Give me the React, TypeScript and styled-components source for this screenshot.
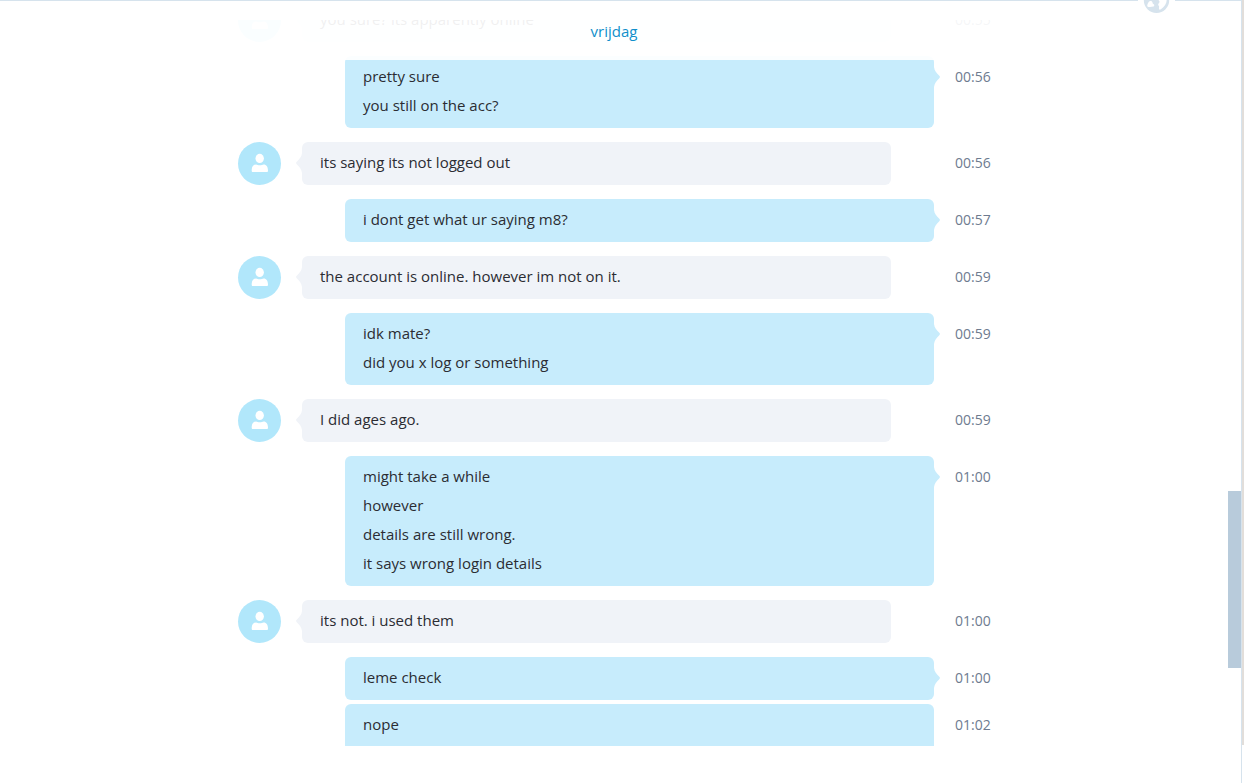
import React from "react";
import styled, { createGlobalStyle } from "styled-components";

const GlobalStyle = createGlobalStyle`
  *, *::before, *::after { box-sizing: border-box; }
  body {
    margin: 0;
    background: #fff;
    color: #2b2c33;
    font-family: "Segoe UI", "Open Sans", "Noto Sans", sans-serif;
    font-size: 15px;
  }
`;

const Page = styled.div`
  display: flex;
  height: 100vh;
  overflow: hidden;
`;

const Panel = styled.main`
  position: relative;
  flex: 1;
  min-width: 0;
  display: flex;
  border-top: 1px solid #d6e3ed;
  border-right: 1px solid #d6e3ed;
`;

const Edge = styled.div`
  width: 2px;
  margin-bottom: 38px;
  background: #e2deda;
`;

const Badge = styled.div`
  position: absolute;
  top: -1px;
  right: 66px;
  width: 37px;
  height: 14px;
  display: flex;
  justify-content: center;
  background: #fff;
`;

const Conversation = styled.section`
  position: relative;
  flex: 1;
  min-width: 0;
  margin: 19px 0 37px;
  overflow: hidden;
`;

const DayHeader = styled.header`
  position: absolute;
  top: 0;
  left: 0;
  right: 0;
  z-index: 1;
  height: 40px;
  line-height: 23px;
  text-align: center;
  color: #0f8fcb;
  background: rgba(255, 255, 255, 0.93);
`;

const Messages = styled.ol`
  display: flex;
  flex-direction: column;
  max-width: 752px;
  margin: -21px auto 0;
  padding: 0;
  list-style: none;
`;

const Row = styled.li<{ $tight?: boolean }>`
  display: flex;
  align-items: flex-start;
  margin-bottom: ${(p) => (p.$tight ? 4 : 14)}px;
`;

const Avatar = styled.div`
  flex: none;
  width: 43px;
  height: 43px;
  border-radius: 50%;
  background: #b1e7fb;
`;

const Bubble = styled.div<{ $mine: boolean; $open?: boolean }>`
  position: relative;
  flex: 1;
  min-width: 0;
  margin-left: ${(p) => (p.$mine ? 107 : 21)}px;
  margin-right: ${(p) => (p.$mine ? 21 : 64)}px;
  padding: 6px 18px 8px;
  border-radius: ${(p) => (p.$open ? "6px 6px 0 0" : "6px")};
  color: #2b2c33;
  background: ${(p) => (p.$mine ? "#c7ecfc" : "#f0f3f8")};
`;

const Line = styled.p`
  margin: 0;
  line-height: 29px;
`;

const Tail = styled.svg<{ $mine: boolean }>`
  position: absolute;
  top: 11px;
  ${(p) => (p.$mine ? "left: 100%;" : "right: 100%; transform: scaleX(-1);")}
  fill: ${(p) => (p.$mine ? "#c7ecfc" : "#f0f3f8")};
`;

const Time = styled.time`
  flex: none;
  width: 35px;
  font-size: 14px;
  line-height: 41px;
  white-space: nowrap;
  color: #6e7b8f;
`;

const ScrollTrack = styled.div`
  width: 13px;
  display: flex;
  flex-direction: column;
`;

const TrackSpace = styled.div<{ $share: number }>`
  flex: ${(p) => p.$share} 1 0;
`;

const Thumb = styled.div`
  flex: 177 1 0;
  background: #b8cbdb;
`;

type Message = { mine: boolean; time: string; lines: string[]; follows?: boolean; tight?: boolean };

const messages: Message[] = [
  { mine: false, time: "00:55", lines: ["you sure? its apparently online"] },
  { mine: true, time: "00:56", lines: ["pretty sure", "you still on the acc?"] },
  { mine: false, time: "00:56", lines: ["its saying its not logged out"] },
  { mine: true, time: "00:57", lines: ["i dont get what ur saying m8?"] },
  { mine: false, time: "00:59", lines: ["the account is online. however im not on it."] },
  { mine: true, time: "00:59", lines: ["idk mate?", "did you x log or something"] },
  { mine: false, time: "00:59", lines: ["I did ages ago."] },
  {
    mine: true,
    time: "01:00",
    lines: ["might take a while", "however", "details are still wrong.", "it says wrong login details"],
  },
  { mine: false, time: "01:00", lines: ["its not. i used them"] },
  { mine: true, time: "01:00", lines: ["leme check"], tight: true },
  { mine: true, time: "01:02", lines: ["nope"], follows: true },
];

const PersonAvatar = () => (
  <Avatar>
    <svg width="43" height="43" viewBox="0 0 43 43" fill="#fff" aria-hidden="true">
      <ellipse cx="21.7" cy="16.4" rx="4.2" ry="4.600" />
      <path d="M13.700 28.800c0-4 1.400-6.400 4.300-6.400 1.200 0 2 .8 3.800.8s2.600-.8 3.800-.8c2.900 0 4.400 2.400 4.400 6.400 0 .8-.4 1.200-1.200 1.200H14.900c-.8 0-1.200-.4-1.200-1.200z" />
    </svg>
  </Avatar>
);

export default function App() {
  return (
    <Page>
      <GlobalStyle />
      <Panel>
        <Badge>
          <svg width="27" height="14" viewBox="0 0 27 14" aria-hidden="true">
            <circle cx="13.5" cy="0.3" r="12.700" fill="#d6e3ed" />
            <path
              d="M4.200 5.800C4.500 3.800 5.300 1.800 7 1c1.200-.3 2.400.2 2.500 1.500 0 1 .5 1.400 1.300 1.800.8.600.6 2-.4 2.300-1.600.5-4.400.7-5.600.2-.4-.2-.6-.6-.6-1z"
              fill="#fff"
            />
            <path
              d="M15.500 0h8.200c0 3.500-2.200 7-5.800 9.300-.8.500-1.500.500-1.800 0-.5-1 .4-2.200-.2-3.300-.6-1-1-1.800-.3-2.600.7-.6 1-1.400.8-2.200z"
              fill="#fff"
            />
          </svg>
        </Badge>
        <Conversation>
          <DayHeader>vrijdag</DayHeader>
          <Messages>
            {messages.map((m, i) => (
              <Row key={i} $tight={m.tight}>
                {!m.mine && <PersonAvatar />}
                <Bubble $mine={m.mine} $open={m.follows}>
                  {m.lines.map((line) => (
                    <Line key={line}>{line}</Line>
                  ))}
                  {!m.follows && (
                    <Tail $mine={m.mine} width="6" height="20" viewBox="0 0 6 20" aria-hidden="true">
                      <path d="M0 0C.5 4 2.500 6 5.300 8.800Q6.500 10 5.300 11.200C2.500 14 .5 16 0 20z" />
                    </Tail>
                  )}
                </Bubble>
                <Time>{m.time}</Time>
              </Row>
            ))}
          </Messages>
        </Conversation>
        <ScrollTrack>
          <TrackSpace $share={490} />
          <Thumb />
          <TrackSpace $share={115} />
        </ScrollTrack>
      </Panel>
      <Edge />
    </Page>
  );
}
